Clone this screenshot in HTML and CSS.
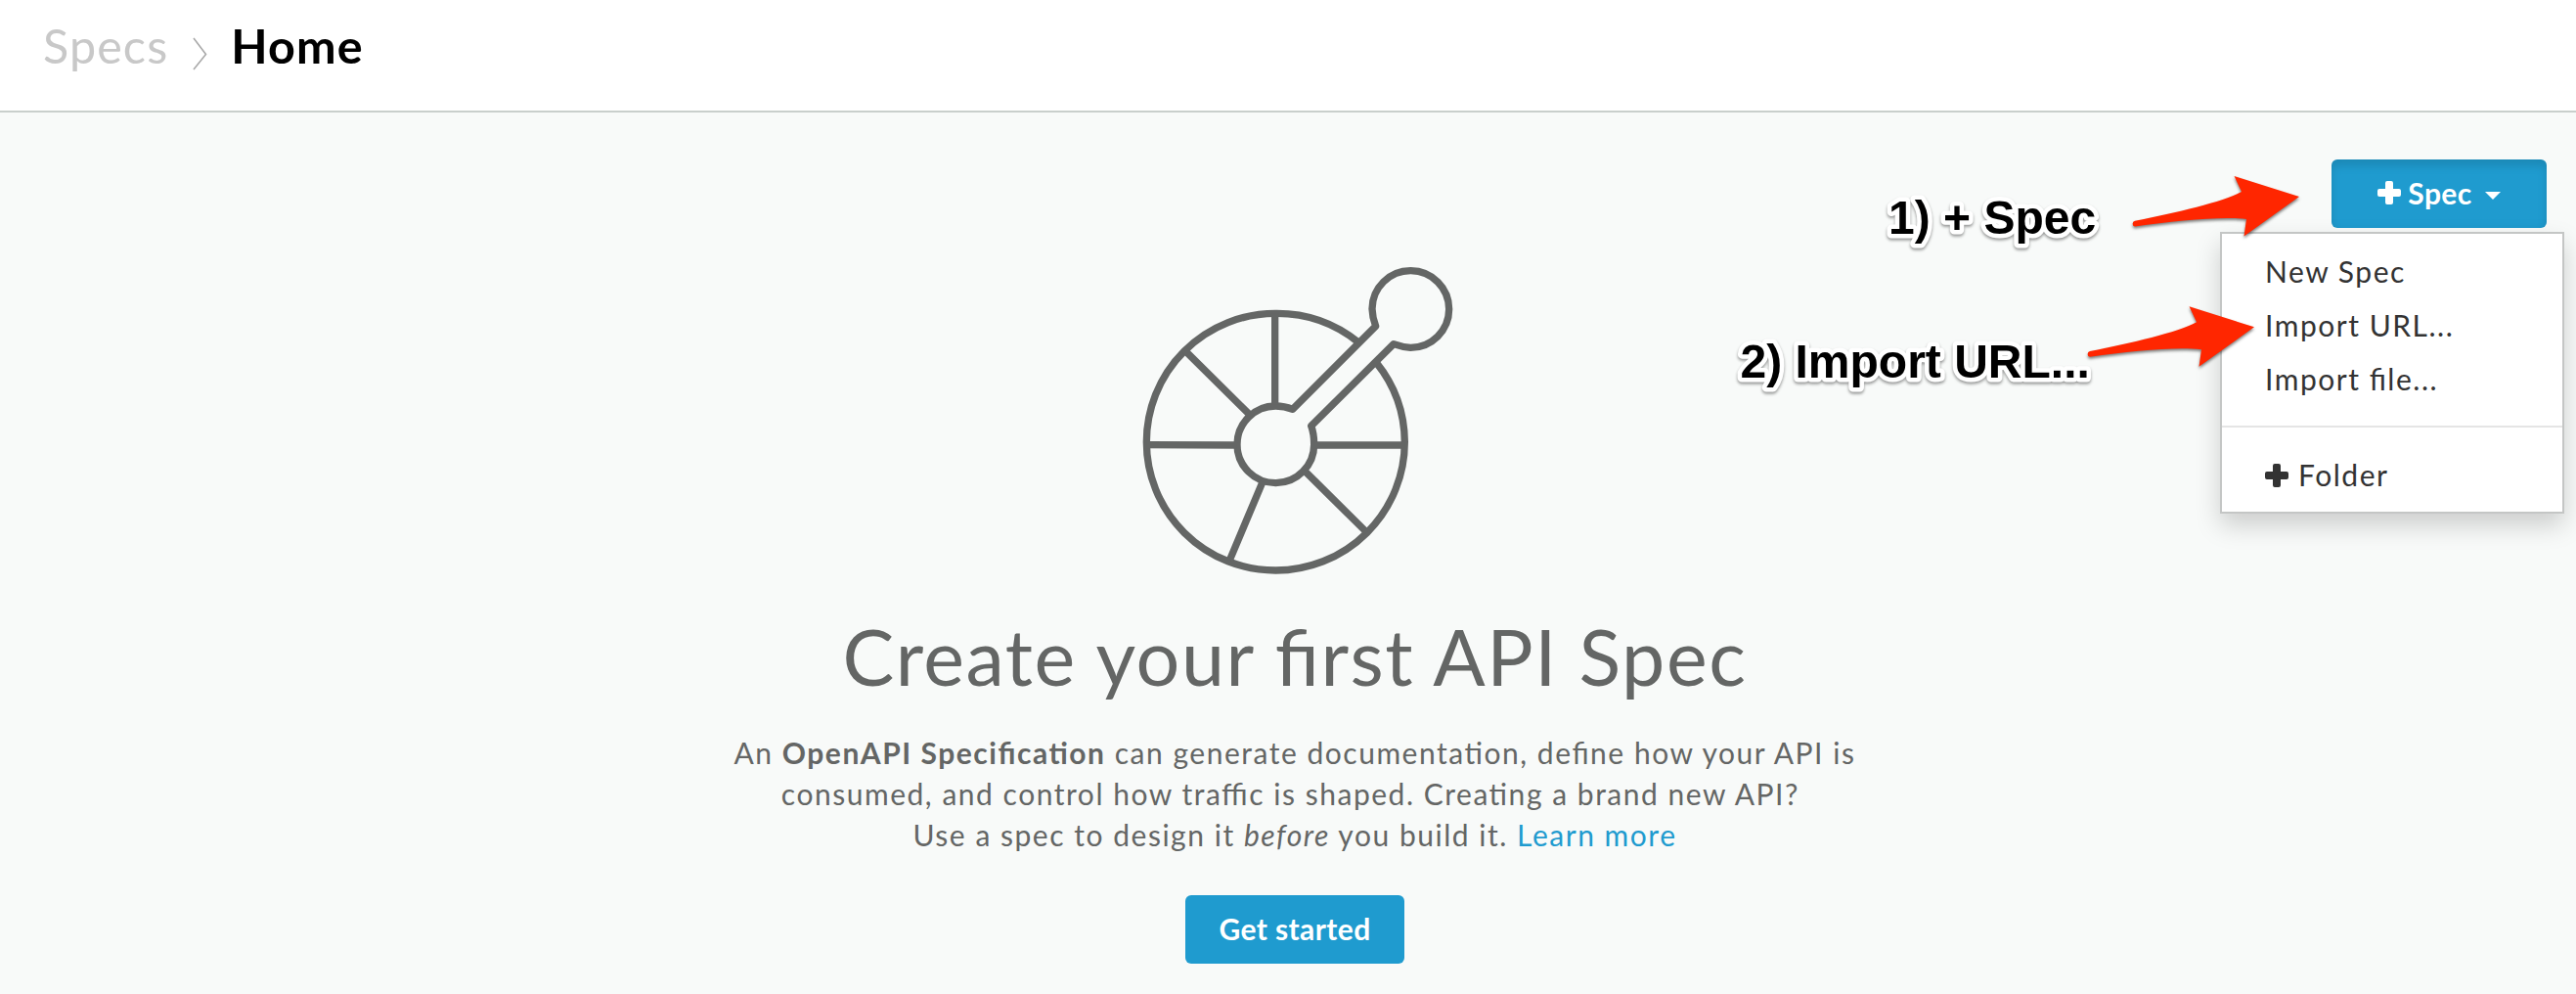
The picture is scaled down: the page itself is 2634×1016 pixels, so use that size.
FILE: index.html
```
<!DOCTYPE html>
<html lang="en">
<head>
<meta charset="utf-8">
<title>Specs - Home</title>
<link rel="stylesheet" href="styles.css">
</head>
<body>
<header class="topbar">
  <nav class="breadcrumb">
    <a class="crumb">Specs</a>
    <svg class="crumb-sep" viewBox="0 0 16 36"><path d="M2 2L14.5 18.5L2 34"/></svg>
    <h1 class="crumb-current">Home</h1>
  </nav>
</header>
<main class="content">
  <div class="toolbar">
    <button class="btn btn-toggle">
      <svg class="plus" viewBox="0 0 24 24"><path d="M10 0h4a2 2 0 0 1 2 2v6h6a2 2 0 0 1 2 2v4a2 2 0 0 1-2 2h-6v6a2 2 0 0 1-2 2h-4a2 2 0 0 1-2-2v-6H2a2 2 0 0 1-2-2v-4a2 2 0 0 1 2-2h6V2a2 2 0 0 1 2-2z"/></svg>
      <span class="btn-label">Spec</span>
      <span class="caret"></span>
    </button>
    <ul class="menu">
      <li>New Spec</li>
      <li>Import URL...</li>
      <li>Import file...</li>
      <li class="divider"></li>
      <li class="folder"><svg class="plus" viewBox="0 0 24 24"><path d="M10 0h4a2 2 0 0 1 2 2v6h6a2 2 0 0 1 2 2v4a2 2 0 0 1-2 2h-6v6a2 2 0 0 1-2 2h-4a2 2 0 0 1-2-2v-6H2a2 2 0 0 1-2-2v-4a2 2 0 0 1 2-2h6V2a2 2 0 0 1 2-2z"/></svg><span>Folder</span></li>
    </ul>
  </div>
  <section class="empty">
    <svg class="logo" viewBox="0 0 1080 1050">
      <path d="M715 298A396 394 0 0 0 463 211A396 394 0 0 0 67 605A396 394 0 0 0 463 999A396 394 0 0 0 859 605A396 394 0 0 0 772 362"/>
      <path d="M515 505L770 250Q760 225 759 197A118 118 0 1 1 877 316Q850 314 825 305L572 556Q581 580 581 612A118 118 0 1 1 463 495Q490 495 515 505Z"/>
      <path d="M461 211V490M185 325L382 520M67 614L345 615M585 615L859 615M550 692L742 882M423 728L322 968"/>
    </svg>
    <h2 class="title">Create your first API Spec</h2>
    <p class="lead">An <b>OpenAPI Specification</b> can generate documentation, define how your API is<br>consumed, and control how traffic is shaped. Creating a brand new API?&nbsp;<br>Use a spec to design it <i>before</i> you build it. <a class="link">Learn more</a></p>
    <button class="btn">Get started</button>
  </section>
</main>
<svg class="annotations" viewBox="0 0 2634 1016">
  <defs>
    <path id="arrow" d="M2.5 -2.7C45 -11 92 -22 111.5 -32.5L104 -48.5L170.5 -27.5L114 13L116.5 -4.5C90 -7.5 45 -3 2.5 3A2.9 2.9 0 0 1 2.5 -2.7Z"/>
  </defs>
  <text class="note" x="1931" y="239">1) + Spec</text>
  <text class="note" x="1779.5" y="386">2) Import URL...</text>
  <use class="arrow" href="#arrow" x="2180.5" y="228.5"/>
  <use class="arrow" href="#arrow" x="2134.5" y="361.8"/>
</svg>
</body>
</html>
```
FILE: styles.css
```
* { box-sizing: border-box; }
body {
  margin: 0;
  position: relative;
  height: 1016px;
  overflow: hidden;
  background: #f8faf9;
  color: #646665;
  font: 30px/42px Lato, sans-serif;
  letter-spacing: 1.52px;
  font-feature-settings: "liga" 1;
}
.topbar {
  height: 115px;
  padding: 17px 44px 0;
  background: #fff;
  border-bottom: 2px solid #c9cfcc;
}
.breadcrumb {
  display: flex;
  align-items: flex-start;
  font-size: 48.5px;
  line-height: 58px;
  letter-spacing: 1.1px;
}
.crumb { color: #c8c8c8; }
.crumb-sep {
  width: 16px;
  height: 36px;
  margin: 20px 24px 0 24px;
  fill: none;
  stroke: #a9a9a9;
  stroke-width: 1.6;
}
.crumb-current {
  margin: 0;
  font: inherit;
  font-weight: 700;
  color: #000;
}
.content { position: relative; padding: 135px 0 0 14px; }
.toolbar {
  position: absolute;
  top: 48px;
  right: 30px;
}
.btn {
  display: flex;
  align-items: center;
  justify-content: center;
  width: 224px;
  height: 70px;
  padding: 0 0 2px;
  border: 0;
  border-radius: 6px;
  background: #1f9bcf;
  color: #fff;
  font: 700 30px/42px Lato, sans-serif;
  letter-spacing: 0.4px;
}
.btn-toggle {
  width: 220px;
  box-shadow: inset 0 6px 10px rgba(0, 0, 0, 0.125);
}
.plus { width: 24px; height: 24px; fill: currentColor; }
.btn-label { margin-left: 7px; }
.caret {
  margin: 6px 0 0 13px;
  border: 8.5px solid transparent;
  border-top-color: #fff;
  border-bottom: 0;
}
.menu {
  position: absolute;
  top: 74px;
  right: -18px;
  width: 352px;
  height: 288px;
  margin: 0;
  padding: 11px 0 10px;
  list-style: none;
  background: #fff;
  border: 2px solid #c4c6c5;
  box-shadow: 0 12px 24px rgba(0, 0, 0, 0.175);
  color: #333;
}
.menu li { padding-left: 44px; line-height: 55px; }
.menu .divider { height: 2px; margin: 20px 0 21px; padding: 0; background: #e5e5e5; }
.menu .folder { display: flex; align-items: center; gap: 10px; }
.empty { display: flex; flex-direction: column; align-items: center; }
.logo {
  width: 360px;
  height: 350px;
  margin-left: 12px;
  fill: none;
  stroke: #646665;
  stroke-width: 22;
  stroke-linejoin: round;
}
.title {
  margin: 23px 0 29px;
  font-size: 79px;
  line-height: 96px;
  font-weight: 400;
}
.lead { margin: 0 0 41px; text-align: center; }
.link { color: #1f9bcf; }
.annotations {
  position: absolute;
  inset: 0;
  width: 2634px;
  height: 1016px;
}
.note {
  font: 700 48px "Liberation Sans", Arial, sans-serif;
  letter-spacing: 0;
  fill: #000;
  stroke: #fff;
  stroke-width: 9px;
  stroke-linejoin: round;
  paint-order: stroke;
  filter: drop-shadow(0 2px 1.5px rgba(0, 0, 0, 0.4));
}
.arrow { fill: #ff2600; filter: drop-shadow(0 2px 1.5px rgba(0, 0, 0, 0.5)); }
```
